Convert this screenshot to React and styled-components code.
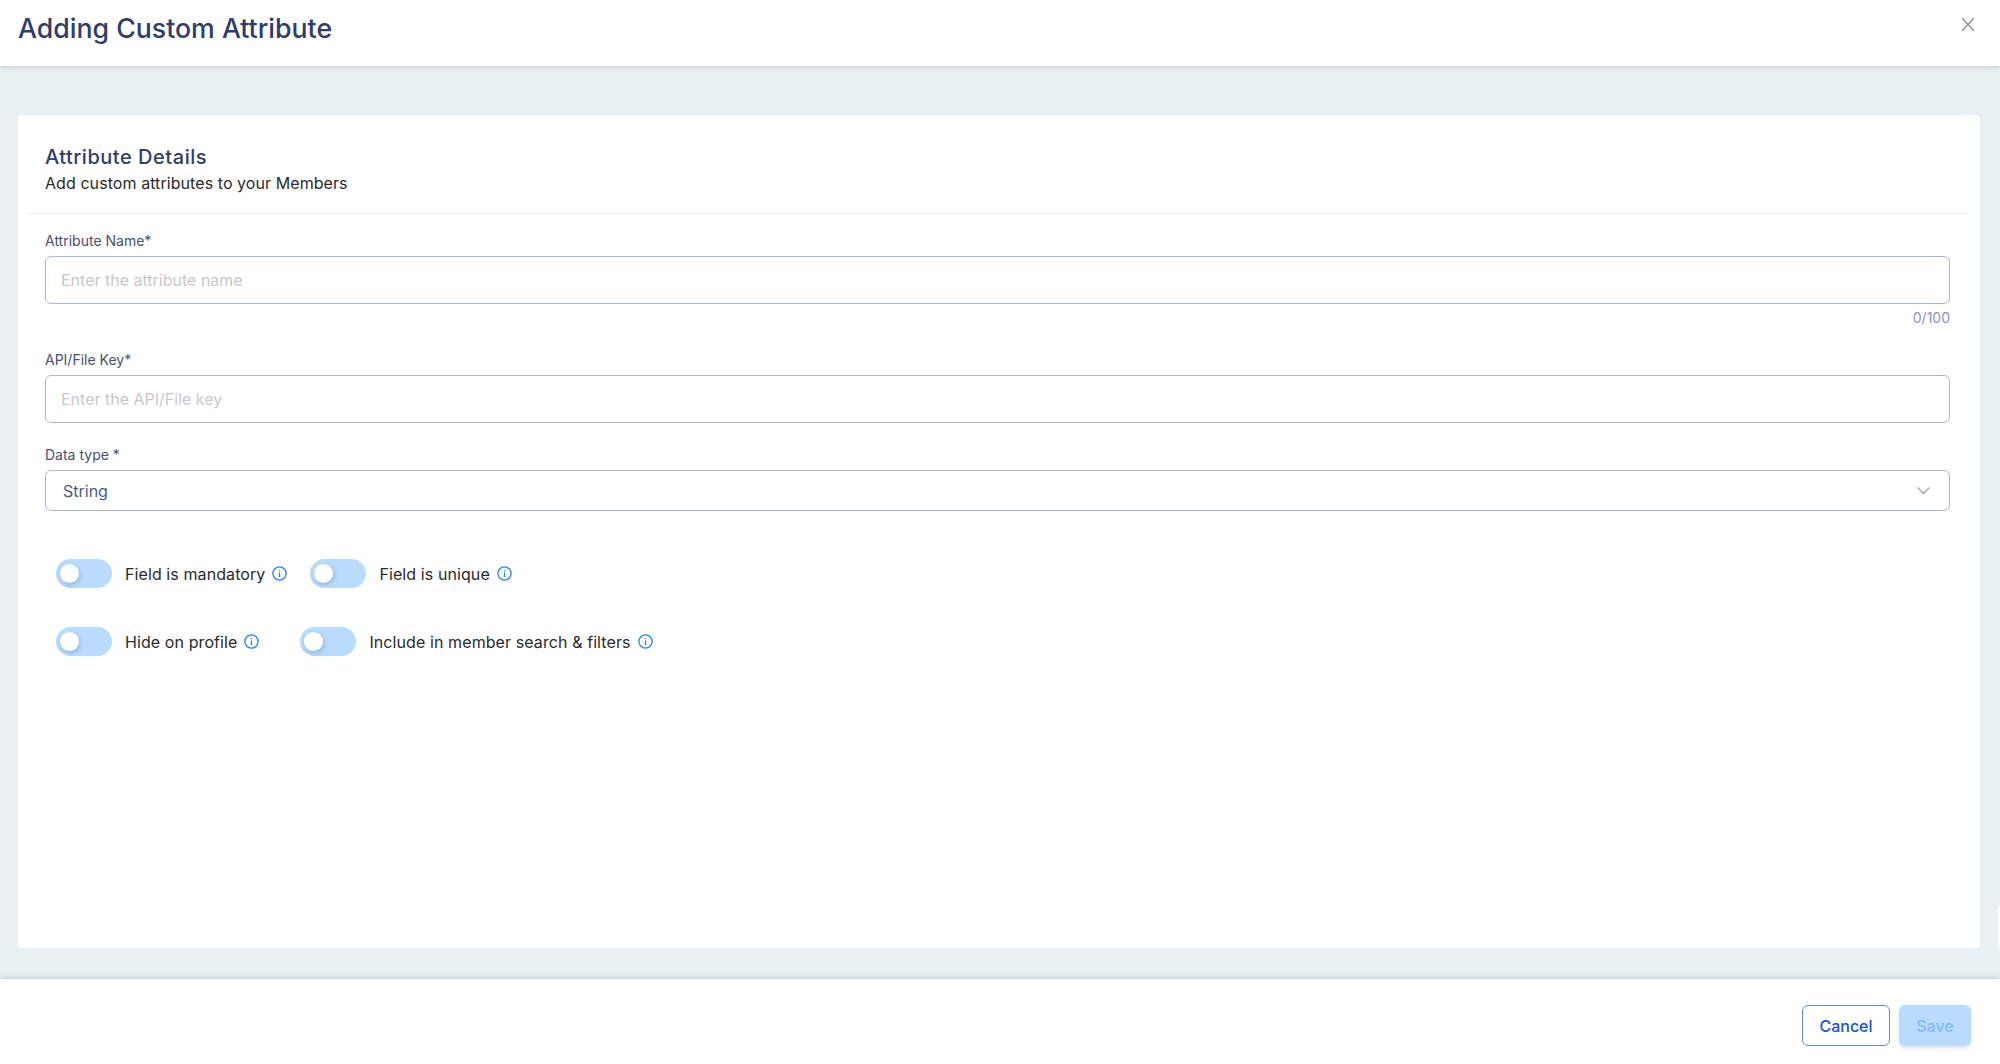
import React from "react";
import styled, { createGlobalStyle } from "styled-components";

const Global = createGlobalStyle`
  html, body { margin: 0; padding: 0; height: 100%; background: #e8f0f4; }
  body { font-family: Inter, "Liberation Sans", sans-serif; overflow: hidden; font-optical-sizing: none; }
  * { box-sizing: border-box; }
`;

const Page = styled.div`
  width: 2000px;
  height: 1064px;
  display: flex;
  flex-direction: column;
  background: #e8f0f4;
`;
const Header = styled.header`
  height: 66px;
  flex: none;
  background: #fff;
  box-shadow: 0 1px 5px rgba(40, 50, 70, 0.2);
  display: flex;
  justify-content: space-between;
  padding: 10px 26px 0 18px;
  position: relative;
`;
const Title = styled.h1`
  margin: 0;
  font-size: 26.7px;
  line-height: 36px;
  font-weight: 500;
  color: #2f3c6e;
`;
const CloseBtn = styled.button`
  border: 0;
  background: none;
  padding: 0;
  width: 12px;
  height: 13px;
  margin: 8px 0 0;
  color: #7e849e;
  display: flex;
`;
const Main = styled.main`
  flex: 1;
  padding: 49px 0 31px 18px;
  display: flex;
`;
const Card = styled.section`
  flex: 1;
  background: #fff;
  border-radius: 4px;
  padding: 0 12px 0 9px;
  margin-right: 18px;
`;
const PeekEdge = styled.div`
  width: 2px;
  height: 42px;
  align-self: flex-end;
  background: #fff;
`;
const CardHead = styled.div`
  height: 99px;
  padding: 29px 18px 0;
  border-bottom: 1px solid #eeeeef;
`;
const CardTitle = styled.h2`
  margin: 0;
  font-size: 20px;
  line-height: 26px;
  font-weight: 500;
  letter-spacing: 0.52px;
  color: #2f3c6e;
`;
const CardSub = styled.p`
  margin: 1px 0 0;
  font-size: 16px;
  line-height: 24px;
  letter-spacing: 0.07px;
  color: #2a2a2c;
`;
const Form = styled.div`
  padding: 18px 18px 0;
  display: flex;
  flex-direction: column;
`;
const Label = styled.label`
  display: block;
  font-size: 14px;
  line-height: 18px;
  color: #4a5072;
  margin-bottom: 6px;
`;
const Field = styled.div`
  margin-bottom: ${(p) => p.$mb}px;
`;
const Input = styled.input`
  display: block;
  width: 100%;
  height: 48px;
  border: 1.5px solid #aeb2e2;
  border-radius: 6px;
  padding: 0 15px;
  background: #fff;
  font: 400 16px Inter, sans-serif;
  font-optical-sizing: none;
  outline: none;
  &::placeholder { color: #c9c7c9; opacity: 1; }
`;
const Counter = styled.div`
  font-size: 14px;
  line-height: 18px;
  color: #8a8fd0;
  text-align: right;
  margin-top: 5px;
`;
const Select = styled.div`
  height: 41px;
  border: 1.5px solid #aeb2e2;
  border-radius: 6px;
  padding: 0 19.5px 0 17px;
  display: flex;
  align-items: center;
  justify-content: space-between;
  font-size: 16px;
  color: #4e5a8e;
`;
const ToggleGroup = styled.div`
  display: flex;
  flex-direction: column;
  padding: 48px 0 0 11px;
  gap: 39px;
`;
const ToggleRow = styled.div`
  display: flex;
  align-items: center;
  height: 29px;
  gap: ${(p) => p.$gap}px;
`;
const ToggleItem = styled.div`
  display: flex;
  align-items: center;
`;
const Track = styled.span`
  width: 56px;
  height: 29px;
  border-radius: 15px;
  background: #b9dbfd;
  display: flex;
  align-items: center;
  padding-left: 4px;
  margin-right: 13px;
`;
const Knob = styled.span`
  width: 19px;
  height: 19px;
  border-radius: 50%;
  background: #fff;
  box-shadow: 1px 2px 5px rgba(60, 90, 140, 0.3);
`;
const ToggleText = styled.span`
  font-size: 16px;
  line-height: 20px;
  letter-spacing: 0.09px;
  color: #2a2a2c;
  margin-right: 7px;
`;
const Footer = styled.footer`
  height: 85px;
  flex: none;
  background: #fff;
  box-shadow: 0 -1px 5px rgba(40, 50, 70, 0.2);
  display: flex;
  justify-content: flex-end;
  gap: 9px;
  padding: 26px 29px 0 0;
  position: relative;
`;
const Btn = styled.button`
  width: ${(p) => p.$w}px;
  height: 41px;
  border-radius: 6px;
  font: 500 16px Inter, sans-serif;
  font-optical-sizing: none;
`;
const CancelBtn = styled(Btn)`
  border: 1.5px solid #6487e6;
  background: #fff;
  color: #2050d8;
`;
const SaveBtn = styled(Btn)`
  border: 0;
  background: #b9dbfd;
  color: #82b8fb;
  box-shadow: 0 2px 4px rgba(40, 80, 140, 0.16);
`;

const Info = () => (
  <svg width="15" height="15" viewBox="0 0 15 15" fill="none" stroke="#2383f5" strokeWidth="1.3" strokeLinecap="round">
    <circle cx="7.5" cy="7.5" r="6.6" />
    <path d="M7.5 7v3.6" />
    <path d="M7.5 4.4v.3" />
  </svg>
);

const Toggle = ({ label }) => (
  <ToggleItem>
    <Track><Knob /></Track>
    <ToggleText>{label}</ToggleText>
    <Info />
  </ToggleItem>
);

export default function App() {
  return (
    <Page>
      <Global />
      <Header>
        <Title>Adding Custom Attribute</Title>
        <CloseBtn aria-label="Close">
          <svg width="12" height="13" viewBox="0 0 12 13" stroke="currentColor" strokeWidth="1.2" fill="none">
            <path d="M0 0l12 13M12 0L0 13" />
          </svg>
        </CloseBtn>
      </Header>
      <Main>
        <Card>
          <CardHead>
            <CardTitle>Attribute Details</CardTitle>
            <CardSub>Add custom attributes to your Members</CardSub>
          </CardHead>
          <Form>
            <Field $mb={24}>
              <Label>Attribute Name*</Label>
              <Input placeholder="Enter the attribute name" />
              <Counter>0/100</Counter>
            </Field>
            <Field $mb={23}>
              <Label>API/File Key*</Label>
              <Input placeholder="Enter the API/File key" />
            </Field>
            <Field $mb={0}>
              <Label>Data type *</Label>
              <Select>
                String
                <svg width="13" height="7" viewBox="0 0 13 7" fill="none" stroke="#a3a3a6" strokeWidth="1.3">
                  <path d="M.5.5l6 6 6-6" />
                </svg>
              </Select>
            </Field>
            <ToggleGroup>
              <ToggleRow $gap={23}>
                <Toggle label="Field is mandatory" />
                <Toggle label="Field is unique" />
              </ToggleRow>
              <ToggleRow $gap={41}>
                <Toggle label="Hide on profile" />
                <Toggle label="Include in member search & filters" />
              </ToggleRow>
            </ToggleGroup>
          </Form>
        </Card>
        <PeekEdge />
      </Main>
      <Footer>
        <CancelBtn $w={88}>Cancel</CancelBtn>
        <SaveBtn $w={72}>Save</SaveBtn>
      </Footer>
    </Page>
  );
}
